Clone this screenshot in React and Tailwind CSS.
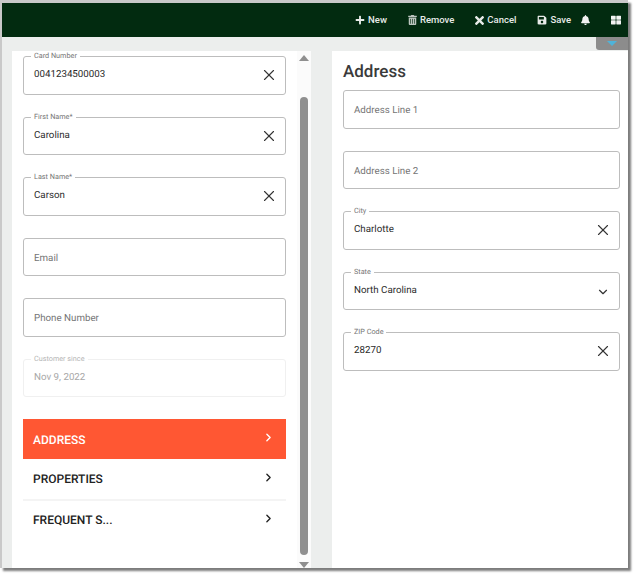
import { FaPlus, FaTimes, FaSave, FaBell, FaThLarge, FaTrashAlt } from "react-icons/fa";
import { X, ChevronDown, ChevronRight } from "lucide-react";

function Field({ label, value, placeholder, icon, disabled, className = "" }) {
  return (
    <div className={`relative h-[38.5px] rounded-[3px] border ${disabled ? "border-[#f0f0f0]" : "border-[#bdbdbd]"} ${className}`}>
      {label && (
        <span className={`absolute left-[7px] -top-[6px] bg-white px-[3px] text-[7.25px] leading-[9px] ${disabled ? "text-[#b5b5b5]" : "text-[#757575]"}`}>
          {label}
        </span>
      )}
      <div className="flex h-full items-start justify-between pl-[10px] pr-[7px]">
        {value && (
          <span className={`mt-[12px] text-[9.75px] leading-[12px] ${disabled ? "text-[#a8a8a8]" : "text-[#2b2b2b]"}`}>{value}</span>
        )}
        {placeholder && <span className="mt-[14px] text-[9.75px] leading-[12px] text-[#757575]">{placeholder}</span>}
        {icon === "clear" && <X className="mt-[9px] ml-auto h-[18px] w-[18px] text-[#333]" strokeWidth={1.5} />}
        {icon === "down" && <ChevronDown className="mt-[12px] ml-auto mr-[2px] h-[14px] w-[14px] text-[#333]" strokeWidth={2} />}
      </div>
    </div>
  );
}

function ToolButton({ icon, label }) {
  return (
    <button className="flex items-center gap-[3px] text-[9.5px] font-medium text-[#e8ebe9]">
      {icon}
      {label}
    </button>
  );
}

function NavRow({ label, active, border, height }) {
  return (
    <div
      className={`flex items-center justify-between pl-[10px] pr-[11px] text-[12px] font-medium ${height} ${
        active ? "bg-[#ff5733] text-white" : "text-[#222]"
      } ${border ? "border-b-2 border-[#f4f4f4]" : ""}`}
    >
      <span className="mt-[1px]">{label}</span>
      <ChevronRight className="mb-[3px] h-[13px] w-[13px]" strokeWidth={2.5} />
    </div>
  );
}

export default function App() {
  return (
    <div className="h-[580px] w-[640px] bg-white font-['Roboto',sans-serif] [text-rendering:geometricPrecision]">
      <div className="flex h-[568px] w-[628px] flex-col border-l-2 border-t-[3px] border-[#c9c9c9] bg-[#eceeed] shadow-[3px_3px_2px_#7d7d7d]">
        <header className="flex h-[34px] shrink-0 items-center justify-end gap-[21px] bg-[#022b10] pr-[7px]">
          <ToolButton icon={<FaPlus className="h-[10px] w-[10px]" />} label="New" />
          <ToolButton icon={<FaTrashAlt className="h-[10px] w-[9px] text-[#bcc5bf]" />} label="Remove" />
          <ToolButton icon={<FaTimes className="h-[13px] w-[9px]" />} label="Cancel" />
          <ToolButton icon={<FaSave className="h-[10px] w-[10px]" />} label="Save" />
          <FaBell className="ml-[-11px] h-[10px] w-[9px] text-[#f2f2f2]" />
          <FaThLarge className="h-[10px] w-[10px] text-[#f2f2f2]" />
        </header>
        <div className="relative flex min-h-0 flex-1 pl-[10px] pt-[14px]">
          <div className="absolute right-0 top-0 flex h-[13px] w-[32px] justify-center rounded-bl-[3px] bg-[#8c8c8c] pt-1">
            <span className="h-0 w-0 border-x-[5px] border-t-[5px] border-x-transparent border-t-[#4fb3d9]" />
          </div>
          <aside className="flex w-[299px] bg-white">
            <div className="flex w-[285px] flex-col pl-[11px] pr-[11px] pt-[5px]">
              <Field label="Card Number" value="0041234500003" icon="clear" />
              <Field label="First Name*" value="Carolina" icon="clear" className="mt-[22px]" />
              <Field label="Last Name*" value="Carson" icon="clear" className="mt-[22px]" />
              <Field placeholder="Email" className="mt-[22px]" />
              <Field placeholder="Phone Number" className="mt-[22px]" />
              <Field label="Customer since" value="Nov 9, 2022" disabled className="mt-[22px]" />
              <div className="mt-[22px]">
                <NavRow label="ADDRESS" active height="h-[40px]" />
                <NavRow label="PROPERTIES" border height="h-[41.5px]" />
                <NavRow label="FREQUENT S..." height="h-[38.5px]" />
              </div>
            </div>
            <div className="flex w-[14px] flex-col items-center bg-[#fbfbfb] pt-[4px]">
              <span className="h-0 w-0 border-x-[5px] border-b-[6px] border-x-transparent border-b-[#8f8f8f]" />
              <div className="mt-[36px] h-[458px] w-2 rounded-full bg-[#8f8f8f]" />
              <span className="mt-[7px] h-0 w-0 border-x-[5px] border-t-[6px] border-x-transparent border-t-[#8f8f8f]" />
            </div>
          </aside>
          <main className="ml-[21px] flex-1 bg-white pl-[11px] pr-[8px]">
            <h2 className="mt-[11px] text-[17px] font-medium leading-[21px] text-[#3a3a3a]">Address</h2>
            <Field placeholder="Address Line 1" className="mt-[7px]" />
            <Field placeholder="Address Line 2" className="mt-[22px]" />
            <Field label="City" value="Charlotte" icon="clear" className="mt-[22px]" />
            <Field label="State" value="North Carolina" icon="down" className="mt-[22px]" />
            <Field label="ZIP Code" value="28270" icon="clear" className="mt-[22px]" />
          </main>
        </div>
      </div>
    </div>
  );
}
